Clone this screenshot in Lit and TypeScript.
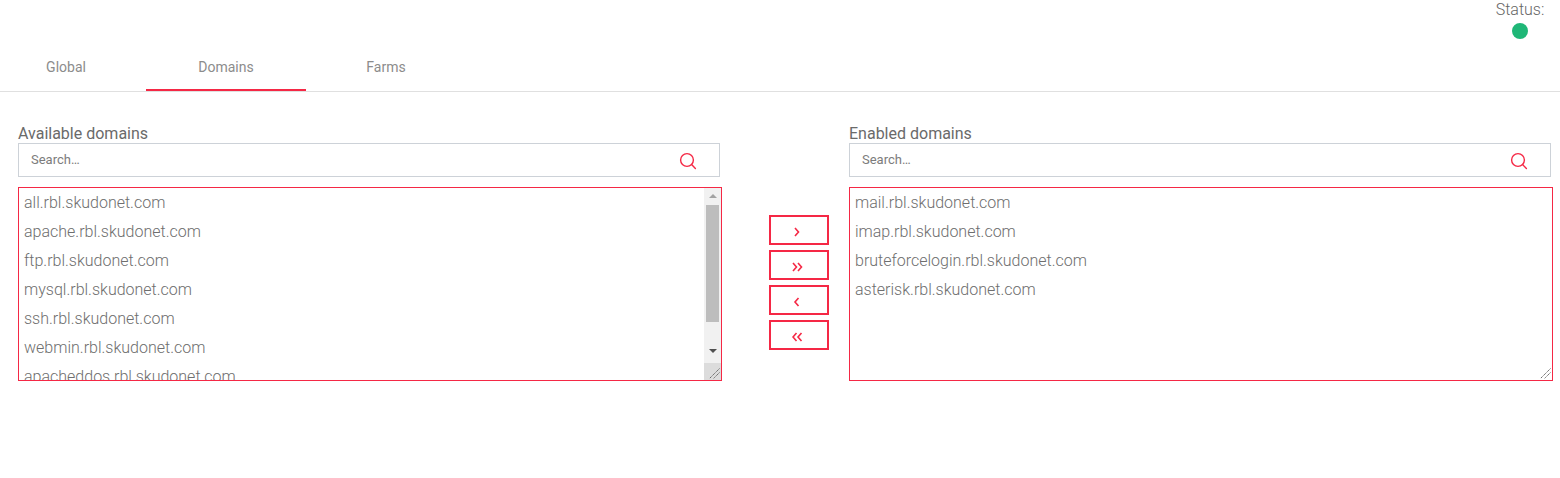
import { LitElement, html, css, svg } from "lit";
import { customElement } from "lit/decorators.js";

const LEFT = ["all.rbl.skudonet.com","apache.rbl.skudonet.com","ftp.rbl.skudonet.com","mysql.rbl.skudonet.com","ssh.rbl.skudonet.com","webmin.rbl.skudonet.com","apacheddos.rbl.skudonet.com"];
const RIGHT = ["mail.rbl.skudonet.com","imap.rbl.skudonet.com","bruteforcelogin.rbl.skudonet.com","asterisk.rbl.skudonet.com"];

const searchIcon = html`<svg class="search-icon" width="18" height="18" viewBox="0 0 18 18" fill="none" stroke="#f52845" stroke-width="1.4"><circle cx="8" cy="8" r="6.4"/><path d="M12.6 12.6 L16.4 16.6" stroke-linecap="round"/></svg>`;
const grip = svg`<path d="M10.5 0.5 L0.5 10.5 M10.5 4.5 L4.5 10.5" stroke="#666" stroke-width="1" stroke-dasharray="1.4 0.6" fill="none"/>`;
const chevrons: Record<string,string> = {
  r: "M3 2 L6.5 6 L3 10",
  rr: "M1 2 L4.5 6 L1 10 M6 2 L9.5 6 L6 10",
  l: "M6.5 2 L3 6 L6.5 10",
  ll: "M4.5 2 L1 6 L4.5 10 M9.5 2 L6 6 L9.5 10",
};

@customElement("app-root")
export class AppRoot extends LitElement {
  static styles = css`
    :host { display: block; width: 1560px; height: 478px; overflow: hidden; background: #fff; font-family: Roboto, sans-serif; color: #666; }
    .status { display: flex; flex-direction: column; align-items: center; width: 48px; margin-left: 1496px; height: 49px; font-size: 16px; font-weight: 300; line-height: 19px; color: #666; }
    .dot { width: 16px; height: 16px; border-radius: 50%; background: #1fb777; margin-top: 4px; }
    .tabs { display: flex; margin-left: -14px; height: 42px; width: 1574px; border-bottom: 1px solid #e0e0e0; box-sizing: content-box; }
    .tab { width: 160px; height: 42px; box-sizing: border-box; display: flex; align-items: center; justify-content: center; font-size: 14px; font-weight: 400; color: #8c8c8c; padding-bottom: 7px; }
    .tab.active { border-bottom: 2px solid #f52845; padding-bottom: 5px; }
    .main { display: flex; padding: 33px 0 0 18px; }
    .col { width: 704px; display: flex; flex-direction: column; }
    .label { font-size: 16px; line-height: 18px; font-weight: 400; color: #6a6a6a; height: 18px; }
    .search { width: 702px; height: 34px; box-sizing: border-box; border: 1px solid #cdd2d8; display: flex; align-items: center; justify-content: space-between; padding: 0 22px 0 12px; font-size: 13px; font-weight: 400; color: #7c7c7c; }
    .search span { margin-bottom: 2px; }
    .search-icon { margin-top: 2px; }
    .list { position: relative; margin-top: 10px; height: 194px; box-sizing: border-box; border: 1px solid #f52845; display: flex; overflow: hidden; }
    .items { flex: 1; min-width: 0; padding: 0 5px; font-size: 16px; font-weight: 300; color: #6e6e6e; line-height: 29px; }
    .item { height: 29px; white-space: nowrap; }
    .scrollbar { width: 17px; background: #f1f1f1; display: flex; flex-direction: column; align-items: center; }
    .arrow { width: 0; height: 0; border-left: 4px solid transparent; border-right: 4px solid transparent; }
    .up { border-bottom: 4px solid #a3a3a3; margin-top: 6px; }
    .thumb { width: 13px; height: 117px; background: #bdbdbd; margin: 7px 0 0; }
    .down { border-top: 4px solid #505050; margin-top: 27px; }
    .corner { position: absolute; right: 0; bottom: 0; width: 17px; height: 17px; background: #dcdcdc; }
    .grip { position: absolute; right: 1px; bottom: 1px; width: 11px; height: 11px; display: block; }
    .mid { width: 127px; display: flex; flex-direction: column; align-items: flex-start; gap: 5px; padding: 90px 0 0 47px; box-sizing: border-box; }
    .mid button { width: 60px; height: 30px; box-sizing: border-box; border: 2px solid #f52845; background: #fff; padding: 0; display: flex; align-items: center; justify-content: center; }
    .mid svg { width: 11px; height: 12px; margin-top: 4px; margin-left: -3px; fill: none; stroke: #f52845; stroke-width: 1.6; }
  `;

  private col(title: string, items: string[], scroll: boolean) {
    return html`<div class="col">
      <div class="label">${title}</div>
      <div class="search"><span>Search…</span>${searchIcon}</div>
      <div class="list">
        <div class="items">${items.map((i) => html`<div class="item">${i}</div>`)}</div>
        ${scroll ? html`<div class="scrollbar"><div class="arrow up"></div><div class="thumb"></div><div class="arrow down"></div></div><div class="corner"></div>` : ""}
        <svg class="grip" viewBox="0 0 11 11">${grip}</svg>
      </div>
    </div>`;
  }

  render() {
    return html`
      <div class="status"><span>Status:</span><div class="dot"></div></div>
      <div class="tabs">
        <div class="tab">Global</div>
        <div class="tab active">Domains</div>
        <div class="tab">Farms</div>
      </div>
      <div class="main">
        ${this.col("Available domains", LEFT, true)}
        <div class="mid">
          ${["r","rr","l","ll"].map((k) => html`<button><svg viewBox="0 0 11 12"><path d=${chevrons[k]}></path></svg></button>`)}
        </div>
        ${this.col("Enabled domains", RIGHT, false)}
      </div>
    `;
  }
}
